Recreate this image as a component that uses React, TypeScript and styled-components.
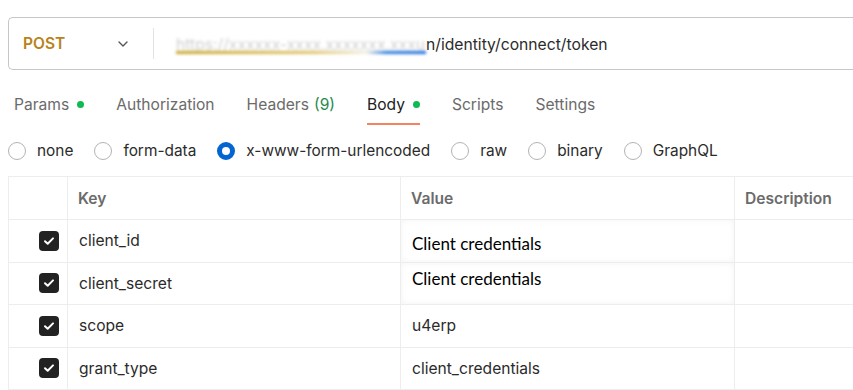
import styled, { createGlobalStyle } from "styled-components";

const GlobalStyle = createGlobalStyle`
  html, body {
    margin: 0;
    padding: 0;
    background: #ffffff;
    overflow: hidden;
  }
  body {
    font-family: Inter, "Noto Sans", "Liberation Sans", sans-serif;
    color: #212121;
  }
`;

interface Row {
  key: string;
  value: string;
  pasted?: boolean;
  shift?: number;
}

const rows: Row[] = [
  { key: "client_id", value: "Client credentials", pasted: true, shift: 3 },
  { key: "client_secret", value: "Client credentials", pasted: true, shift: -5 },
  { key: "scope", value: "u4erp" },
  { key: "grant_type", value: "client_credentials" },
];

const tabs = [
  { label: "Params", dot: true },
  { label: "Authorization" },
  { label: "Headers", count: "(9)" },
  { label: "Body", dot: true, active: true },
  { label: "Scripts" },
  { label: "Settings" },
];

const bodyTypes = ["none", "form-data", "x-www-form-urlencoded", "raw", "binary", "GraphQL"];

const App = () => {
  return (
    <Page>
      <GlobalStyle />
      <UrlBar>
        <Method>
          <MethodName>POST</MethodName>
          <svg width="14" height="14" viewBox="0 0 14 14" fill="none">
            <path d="M3 5l4 4 4-4" stroke="#555" strokeWidth="1.4" strokeLinecap="round" strokeLinejoin="round" />
          </svg>
        </Method>
        <Divider />
        <UrlText>
          <Redacted>https://xxxxxx-xxxx.xxxxxxx.xxxu</Redacted>
          n/identity/connect/token
        </UrlText>
      </UrlBar>

      <Tabs>
        {tabs.map((t) => (
          <Tab key={t.label} active={t.active}>
            {t.label}
            {t.count && <Count>{t.count}</Count>}
            {t.dot && <Dot />}
          </Tab>
        ))}
      </Tabs>

      <Radios>
        {bodyTypes.map((b) => (
          <RadioItem key={b}>
            <Radio checked={b === "x-www-form-urlencoded"} />
            {b}
          </RadioItem>
        ))}
      </Radios>

      <Table>
        <HeadRow>
          <CheckCell />
          <HeadCell>Key</HeadCell>
          <HeadCell>Value</HeadCell>
          <HeadCell last>Description</HeadCell>
        </HeadRow>
        {rows.map((r) => (
          <BodyRow key={r.key}>
            <CheckCell>
              <CheckBox>
                <svg width="14" height="14" viewBox="0 0 14 14" fill="none">
                  <path d="M3 7.2l2.7 2.6L11 4.4" stroke="#fff" strokeWidth="2" strokeLinecap="round" strokeLinejoin="round" />
                </svg>
              </CheckBox>
            </CheckCell>
            <Cell>{r.key}</Cell>
            <ValueCell pasted={r.pasted}>
              <ValueText pasted={r.pasted} style={r.shift ? { transform: `translateY(${r.shift}px)` } : undefined}>
                {r.value}
              </ValueText>
            </ValueCell>
            <Cell last />
          </BodyRow>
        ))}
      </Table>
    </Page>
  );
};

export default App;

const Page = styled.div`
  width: 853px;
  height: 390px;
  padding: 17px 0 0 8px;
  box-sizing: border-box;
  overflow: hidden;
`;

const UrlBar = styled.div`
  display: flex;
  align-items: center;
  height: 53px;
  width: 900px;
  box-sizing: border-box;
  border: 1px solid #c6c6c6;
  border-right: none;
  border-radius: 5px 0 0 5px;
  padding-left: 14px;
`;

const Method = styled.div`
  display: flex;
  align-items: center;
  justify-content: space-between;
  width: 107px;
  padding-right: 23px;
`;

const MethodName = styled.span`
  font-size: 15.5px;
  font-weight: 600;
  color: #b7831a;
`;

const Divider = styled.div`
  width: 1px;
  height: 31px;
  background: #e3e3e3;
`;

const UrlText = styled.div`
  display: flex;
  align-items: center;
  padding-left: 22px;
  padding-top: 1px;
  font-size: 15.7px;
  color: #2b2b2b;
  white-space: nowrap;
`;

const Redacted = styled.span`
  position: relative;
  display: inline-block;
  width: 250px;
  white-space: nowrap;
  color: #cfcfcf;
  filter: blur(1.4px);

  &::after {
    content: "";
    position: absolute;
    left: 0;
    right: 0;
    bottom: 0;
    height: 3px;
    background: linear-gradient(90deg, #c9a62a 0%, #e0c56a 55%, #f3f0e2 76%, #2f7fe0 84%, #1f6fde 100%);
  }
`;

const Tabs = styled.div`
  display: flex;
  gap: 32px;
  margin-top: 18px;
  padding-left: 6px;
  height: 37px;
`;

const Tab = styled.div<{ active?: boolean }>`
  display: flex;
  align-items: center;
  gap: 5px;
  height: 32px;
  padding-bottom: 3px;
  font-size: 15.6px;
  color: ${({ active }) => (active ? "#212121" : "#6b6b6b")};
  border-bottom: 2px solid ${({ active }) => (active ? "#f4845f" : "transparent")};
`;

const Count = styled.span`
  color: #1f8c4c;
`;

const Dot = styled.span`
  width: 7px;
  height: 7px;
  border-radius: 50%;
  background: #0cbb52;
  margin-left: 3px;
`;

const Radios = styled.div`
  display: flex;
  align-items: center;
  gap: 21px;
  height: 51px;
  font-size: 15.4px;
  color: #2b2b2b;
`;

const RadioItem = styled.label`
  display: flex;
  align-items: center;
  gap: 11px;
`;

const Radio = styled.span<{ checked?: boolean }>`
  width: 18px;
  height: 18px;
  box-sizing: border-box;
  border-radius: 50%;
  border: ${({ checked }) => (checked ? "5px solid #0265d2" : "1.5px solid #b3b3b3")};
  background: #fff;
`;

const Table = styled.div`
  width: 900px;
  border-top: 1px solid #ededed;
  border-left: 1px solid #ededed;
`;

const HeadRow = styled.div`
  display: grid;
  grid-template-columns: 59px 333px 334px 1fr;
  height: 43px;
  box-sizing: border-box;
  border-bottom: 1px solid #ededed;
`;

const BodyRow = styled(HeadRow)`
  height: 42.5px;
`;

const CheckCell = styled.div`
  display: flex;
  align-items: center;
  justify-content: flex-end;
  padding-right: 8px;
  border-right: 1px solid #ededed;
`;

const HeadCell = styled.div<{ last?: boolean }>`
  display: flex;
  align-items: center;
  padding-left: 10px;
  font-size: 15.6px;
  font-weight: 600;
  color: #6b6b6b;
  border-right: ${({ last }) => (last ? "none" : "1px solid #ededed")};
`;

const Cell = styled.div<{ last?: boolean }>`
  display: flex;
  align-items: center;
  padding-left: 11px;
  font-size: 15.6px;
  color: #2b2b2b;
  border-right: ${({ last }) => (last ? "none" : "1px solid #ededed")};
`;

const ValueCell = styled(Cell)<{ pasted?: boolean }>`
  box-shadow: ${({ pasted }) => (pasted ? "inset 0 0 6px rgba(0,0,0,0.05)" : "none")};
`;

const ValueText = styled.span<{ pasted?: boolean }>`
  font-family: ${({ pasted }) =>
    pasted ? `Lato, "Open Sans", "Liberation Sans", sans-serif` : `Inter, "Noto Sans", sans-serif`};
  font-size: ${({ pasted }) => (pasted ? "17px" : "15.6px")};
  color: ${({ pasted }) => (pasted ? "#000" : "#2b2b2b")};
`;

const CheckBox = styled.span`
  display: flex;
  align-items: center;
  justify-content: center;
  width: 20px;
  height: 20px;
  border-radius: 4px;
  background: #222222;
`;
